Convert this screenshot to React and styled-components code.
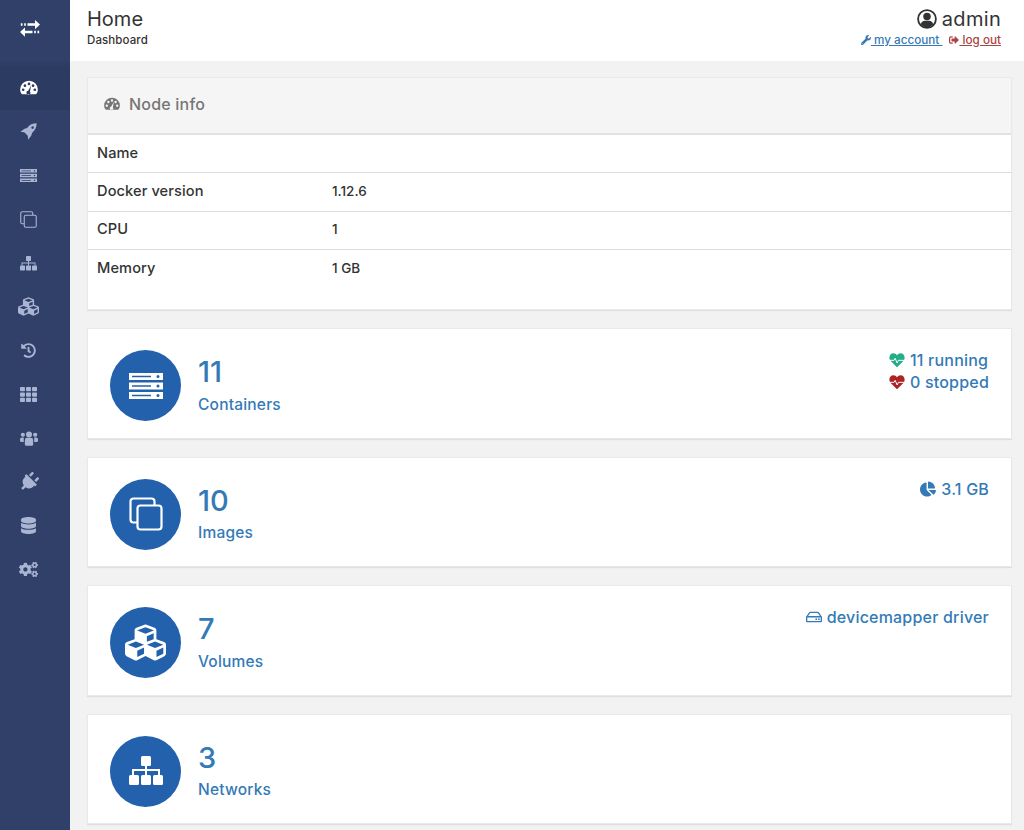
import React from "react";
import styled, { createGlobalStyle } from "styled-components";
import {
  FaCubes,
  FaHistory,
  FaTh,
  FaPlug,
  FaDatabase,
  FaCogs,
  FaWrench,
  FaSignOutAlt,
  FaChartPie,
  FaRegHdd,
} from "react-icons/fa";

const blue = "#337ab7";

const GlobalStyle = createGlobalStyle`
  html, body {
    margin: 0;
    padding: 0;
    background: #f2f2f2;
    font-family: "Inter", "Open Sans", sans-serif;
  }
  * { box-sizing: border-box; }
`;

// icons drawn by hand, the package ones have other strokes
const ExchangeIcon = () => (
  <svg width="1em" viewBox="0 0 24 20" fill="currentColor">
    <path d="M1 4h2v3H1zM5 4h2v3H5zM9 4h9V0l6 5.5-6 5.5V7H9z" />
    <path d="M6 9v4h9v3H6v4l-6-5.5zM17 13h2v3h-2zM21 13h2v3h-2z" />
  </svg>
);

const GaugeIcon = () => (
  <svg width="1em" viewBox="0 0 24 20" fill="currentColor" fillRule="evenodd">
    <path d="M12 1A11.8 11.8 0 0 0 .2 12.8c0 2 .5 3.8 1.5 5.3q.7 1 1.8 1h17q1.1 0 1.8-1c1-1.5 1.5-3.3 1.5-5.3A11.8 11.8 0 0 0 12 1zM10.2 5.2a1.8 1.8 0 1 0 3.6 0a1.8 1.8 0 1 0-3.6 0zM4.8 7.6a1.8 1.8 0 1 0 3.6 0a1.8 1.8 0 1 0-3.6 0zM2.4 13a1.8 1.8 0 1 0 3.6 0a1.8 1.8 0 1 0-3.6 0zM18 13a1.8 1.8 0 1 0 3.6 0a1.8 1.8 0 1 0-3.6 0zM15.6 7.6a1.8 1.8 0 1 0 3.6 0a1.8 1.8 0 1 0-3.6 0zM14.8 7.2l-3.9 7.2a2.6 2.6 0 1 0 2.4 1z" />
  </svg>
);

const RocketIcon = () => (
  <svg width="1em" viewBox="0 0 24 24" fill="currentColor" fillRule="evenodd">
    <path d="M23.5.5C18 .5 13.5 2.5 10 7L6.5 8 .5 12.5 6 13l5 5 .5 5.5L16 17.5l1-3.5C21.5 10.5 23.5 6 23.5.5zM16 6.5a1.8 1.8 0 1 0 3.6 0a1.8 1.8 0 1 0-3.6 0z" />
  </svg>
);

const ServerIcon = () => (
  <svg width="1em" viewBox="0 0 34 26" fill="currentColor" fillRule="evenodd">
    <path d="M0 0h34v7H0zM3 2.8v1.5h19V2.8zM27.5 3.5a1.5 1.5 0 1 0 3 0a1.5 1.5 0 1 0-3 0z" />
    <path d="M0 9.5h34v7H0zM3 12.3v1.5h19v-1.5zM27.5 13a1.5 1.5 0 1 0 3 0a1.5 1.5 0 1 0-3 0z" />
    <path d="M0 19h34v7H0zM3 21.8v1.5h19v-1.5zM27.5 22.5a1.5 1.5 0 1 0 3 0a1.5 1.5 0 1 0-3 0z" />
  </svg>
);

const CloneIcon = () => (
  <svg width="1em" viewBox="0 0 34 34" fill="none" stroke="currentColor" strokeWidth="2.2">
    <path d="M8 25.5H4.5a3 3 0 0 1-3-3v-18a3 3 0 0 1 3-3h18a3 3 0 0 1 3 3V8" />
    <rect x="8.5" y="8.5" width="24" height="24" rx="3" />
  </svg>
);

const SitemapIcon = () => (
  <svg width="1em" viewBox="0 0 34 30" fill="currentColor">
    <rect x="12" y="0" width="10" height="10" rx="1.5" />
    <path d="M16 10h2v3h13v6h-2v-4H18v4h-2v-4H5v4H3v-6h13z" />
    <rect x="0" y="19" width="10" height="10" rx="1.5" />
    <rect x="12" y="19" width="10" height="10" rx="1.5" />
    <rect x="24" y="19" width="10" height="10" rx="1.5" />
  </svg>
);

const UsersIcon = () => (
  <svg width="1em" viewBox="0 0 24 20" fill="currentColor">
    <circle cx="12" cy="4.5" r="4" />
    <circle cx="3.8" cy="5" r="2.8" />
    <circle cx="20.2" cy="5" r="2.8" />
    <path d="M6.5 12q0-3 3-3h5q3 0 3 3v5.5q0 2-2 2h-7q-2 0-2-2z" />
    <path d="M0 11q0-2.5 2.500-2.5H5Q5 10 5 11v3.5H2q-2 0-2-2zM24 11q0-2.500-2.500-2.500H19q0 1.500 0 2.500v3.500h3q2 0 2-2z" />
  </svg>
);

const PlugIcon = styled(FaPlug)`
  transform: rotate(45deg);
`;

const UserCircleIcon = () => (
  <svg width="1em" viewBox="0 0 24 24">
    <circle cx="12" cy="12" r="10.7" fill="none" stroke="currentColor" strokeWidth="2.2" />
    <circle cx="12" cy="9" r="4.5" fill="currentColor" />
    <path d="M4.5 18.5q1-4.500 5-4.500h5q4 0 5 4.500A10 10 0 0 1 4.500 18.500z" fill="currentColor" />
  </svg>
);

const PulseHeartIcon = () => (
  <svg width="1em" viewBox="0 0 24 22">
    <path
      fill="currentColor"
      d="M12 21.5 2.500 12C-1.500 7.500 1 .5 6.800.5 9 .5 10.800 1.800 12 3.500 13.200 1.800 15 .5 17.200.5 23 .5 25.500 7.500 21.500 12Z"
    />
    <path
      fill="none"
      stroke="#fff"
      strokeWidth="1.5"
      d="M0 11h7.500l1.700-3 3 7 2-4H24"
    />
  </svg>
);

const navItems = [
  { icon: GaugeIcon, active: true, size: 18 },
  { icon: RocketIcon, size: 17 },
  { icon: ServerIcon, size: 17 },
  { icon: CloneIcon, size: 17 },
  { icon: SitemapIcon, size: 17 },
  { icon: FaCubes, size: 21 },
  { icon: FaHistory, size: 15 },
  { icon: FaTh, size: 17 },
  { icon: UsersIcon, size: 18 },
  { icon: PlugIcon, size: 20 },
  { icon: FaDatabase, size: 17 },
  { icon: FaCogs, size: 19 },
];

const nodeRows = [
  { label: "Name", value: "" },
  { label: "Docker version", value: "1.12.6" },
  { label: "CPU", value: "1" },
  { label: "Memory", value: "1 GB" },
];

const App = () => {
  return (
    <>
      <GlobalStyle />
      <Page>
        <Sidebar>
          <Brand>
            <ExchangeIcon />
          </Brand>
          <Nav>
            {navItems.map(({ icon: Icon, active, size }, i) => (
              <NavItem key={i} $active={active} $size={size}>
                <Icon />
              </NavItem>
            ))}
          </Nav>
        </Sidebar>
        <Main>
          <Header>
            <div>
              <Title>Home</Title>
              <Subtitle>Dashboard</Subtitle>
            </div>
            <UserBox>
              <UserName>
                <UserCircleIcon />
                admin
              </UserName>
              <UserLinks>
                <UserLink $color={blue}>
                  <FaWrench />
                  <span>&nbsp;my account&nbsp;</span>
                </UserLink>
                <UserLink $color="#a94442">
                  <FaSignOutAlt />
                  <span>&nbsp;log out</span>
                </UserLink>
              </UserLinks>
            </UserBox>
          </Header>
          <Content>
            <InfoCard>
              <InfoHeader>
                <GaugeIcon />
                Node info
              </InfoHeader>
              {nodeRows.map((row) => (
                <InfoRow key={row.label}>
                  <InfoLabel>{row.label}</InfoLabel>
                  <InfoValue>{row.value}</InfoValue>
                </InfoRow>
              ))}
            </InfoCard>

            <StatCard>
              <Circle>
                <ServerIcon />
              </Circle>
              <StatText>
                <Count>11</Count>
                <StatLabel>Containers</StatLabel>
              </StatText>
              <StatExtra>
                <ExtraLine>
                  <Tinted $color="#23ae89">
                    <PulseHeartIcon />
                  </Tinted>
                  11 running
                </ExtraLine>
                <ExtraLine>
                  <Tinted $color="#ae2323">
                    <PulseHeartIcon />
                  </Tinted>
                  0 stopped
                </ExtraLine>
              </StatExtra>
            </StatCard>

            <StatCard>
              <Circle>
                <CloneIcon />
              </Circle>
              <StatText>
                <Count>10</Count>
                <StatLabel>Images</StatLabel>
              </StatText>
              <StatExtra>
                <ExtraLine>
                  <FaChartPie />
                  3.1 GB
                </ExtraLine>
              </StatExtra>
            </StatCard>

            <StatCard>
              <Circle>
                <CubesIcon />
              </Circle>
              <StatText>
                <Count>7</Count>
                <StatLabel>Volumes</StatLabel>
              </StatText>
              <StatExtra>
                <ExtraLine>
                  <FaRegHdd />
                  devicemapper driver
                </ExtraLine>
              </StatExtra>
            </StatCard>

            <StatCard>
              <Circle>
                <SitemapIcon />
              </Circle>
              <StatText>
                <Count>3</Count>
                <StatLabel>Networks</StatLabel>
              </StatText>
            </StatCard>
          </Content>
        </Main>
      </Page>
    </>
  );
};

export default App;

const CubesIcon = styled(FaCubes)`
  font-size: 41px;
`;

const Page = styled.div`
  display: flex;
  width: 1024px;
  height: 830px;
  overflow: hidden;
`;

const Sidebar = styled.aside`
  width: 70px;
  flex: none;
  background: #304069;
  color: #fff;
`;

const Brand = styled.div`
  height: 66px;
  display: flex;
  align-items: center;
  justify-content: center;
  padding: 0 11px 5px 0;
  font-size: 20px;
  border-bottom: 4px solid #2e3d65;
`;

const Nav = styled.nav`
  display: flex;
  flex-direction: column;
`;

const NavItem = styled.div`
  height: 43.8px;
  display: flex;
  align-items: center;
  justify-content: center;
  padding-right: 13px;
  font-size: ${(p) => p.$size}px;
  color: ${(p) => (p.$active ? "#ffffff" : "#a9b5d3")};
  background: ${(p) => (p.$active ? "#2c3b61" : "transparent")};
`;

const Main = styled.main`
  flex: 1;
  min-width: 0;
  display: flex;
  flex-direction: column;
`;

const Header = styled.header`
  height: 61px;
  flex: none;
  background: #fff;
  display: flex;
  justify-content: space-between;
  padding: 8px 23px 0 17px;
`;

const Title = styled.div`
  font-size: 20px;
  line-height: 22px;
  color: #333;
  font-weight: 400;
`;

const Subtitle = styled.div`
  font-size: 11.5px;
  line-height: 14px;
  margin-top: 3px;
  color: #333;
  font-weight: 500;
  letter-spacing: 0.1px;
`;

const UserBox = styled.div`
  display: flex;
  flex-direction: column;
  align-items: flex-end;
`;

const UserName = styled.div`
  display: flex;
  align-items: center;
  gap: 5px;
  font-size: 20px;
  line-height: 22px;
  letter-spacing: 0.3px;
  color: #333;
`;

const UserLinks = styled.div`
  display: flex;
  gap: 7px;
  margin-top: 3px;
  font-size: 11.7px;
  line-height: 14px;
  font-weight: 500;
`;

const UserLink = styled.a`
  display: flex;
  align-items: center;
  color: ${(p) => p.$color};
  & span { text-decoration: underline; }
  & svg { font-size: 10px; }
`;

const Content = styled.div`
  flex: 1;
  display: flex;
  flex-direction: column;
  gap: 18px;
  padding: 16px 12px 0 17px;
`;

const InfoCard = styled.section`
  background: #fff;
  border: 1px solid #e9e9e9;
  box-shadow: 0 1px 1px rgba(0, 0, 0, 0.08);
  height: 233px;
  flex: none;
`;

const InfoHeader = styled.div`
  height: 57px;
  display: flex;
  align-items: center;
  gap: 9px;
  padding: 0 0 3px 16px;
  background: #f5f5f5;
  border-bottom: 2px solid #e2e2e2;
  color: #767676;
  font-size: 16px;
  font-weight: 500;
  letter-spacing: 0.2px;
  & svg { font-size: 16px; }
`;

const InfoRow = styled.div`
  height: 38.4px;
  display: flex;
  align-items: center;
  padding: 0 0 2px 9px;
  font-size: 14.6px;
  color: #333;
  border-bottom: 1px solid #ddd;
  &:last-child { border-bottom: none; }
`;

const InfoLabel = styled.div`
  width: 235px;
  font-weight: 500;
  letter-spacing: 0.1px;
`;

const InfoValue = styled.div`
  font-size: 13.5px;
  font-weight: 500;
`;

const StatCard = styled.section`
  height: 110.5px;
  flex: none;
  background: #fff;
  border: 1px solid #e9e9e9;
  box-shadow: 0 1px 1px rgba(0, 0, 0, 0.08);
  display: flex;
  padding: 21px 22px 0 22px;
`;

const Circle = styled.div`
  width: 71px;
  height: 71px;
  border-radius: 50%;
  background: #2361ad;
  color: #fff;
  display: flex;
  align-items: center;
  justify-content: center;
  font-size: 34px;
  flex: none;
`;

const StatText = styled.div`
  margin-left: 17px;
  color: ${blue};
`;

const Count = styled.div`
  font-size: 29px;
  line-height: 44px;
  font-weight: 500;
`;

const StatLabel = styled.div`
  font-size: 15.5px;
  line-height: 20px;
  font-weight: 500;
  letter-spacing: 0.2px;
  margin-top: 0.5px;
`;

const StatExtra = styled.div`
  margin-left: auto;
  margin-top: -1px;
  display: flex;
  flex-direction: column;
  align-items: flex-start;
  color: ${blue};
`;

const ExtraLine = styled.div`
  display: flex;
  align-items: center;
  gap: 5px;
  font-size: 16px;
  line-height: 22px;
  font-weight: 500;
  letter-spacing: 0.2px;
`;

const Tinted = styled.span`
  display: flex;
  color: ${(p) => p.$color};
`;
